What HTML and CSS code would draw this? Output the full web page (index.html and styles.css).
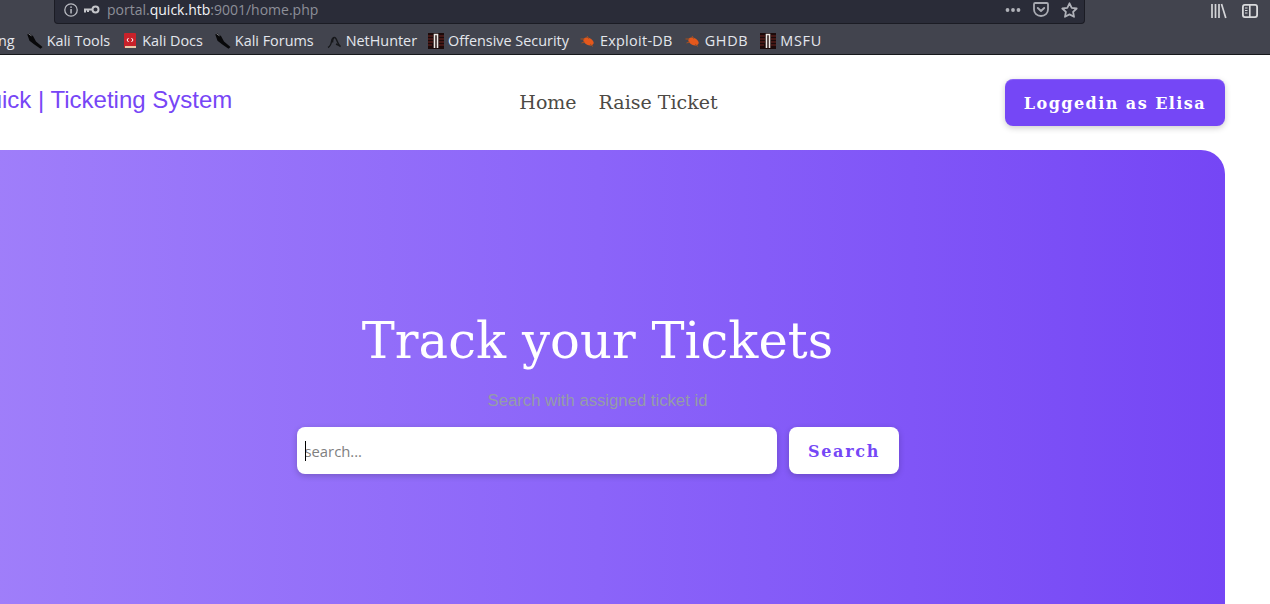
FILE: index.html
```html
<!DOCTYPE html>
<html lang="en">
<head>
<meta charset="utf-8">
<title>Quick | Ticketing System</title>
<link rel="stylesheet" href="styles.css">
</head>
<body>
<div class="chrome">
  <div class="urlrow">
    <div class="urlbar">
      <svg class="ico-info" width="14" height="14" viewBox="0 0 14 14"><circle cx="7" cy="7" r="6.200" fill="none" stroke="#b9bbc2" stroke-width="1.300"/><rect x="6.300" y="6" width="1.500" height="4.500" fill="#b9bbc2"/><rect x="6.300" y="3.400" width="1.500" height="1.500" fill="#b9bbc2"/></svg>
      <svg class="ico-key" width="17" height="10" viewBox="0 0 17 10"><circle cx="12.500" cy="4.500" r="3" fill="none" stroke="#c4c5ca" stroke-width="2"/><path d="M1 4.500h9M2 4.500v3M5 4.500v2.500" fill="none" stroke="#c4c5ca" stroke-width="2"/></svg>
      <div class="url"><span>portal.</span><b>quick.htb</b><span>:9001/home.php</span></div>
      <div class="url-actions">
        <svg width="16" height="6" viewBox="0 0 16 6"><circle cx="2.500" cy="3" r="1.900" fill="#b0b2b9"/><circle cx="8" cy="3" r="1.900" fill="#b0b2b9"/><circle cx="13.500" cy="3" r="1.900" fill="#b0b2b9"/></svg>
        <svg width="16" height="16" viewBox="0 0 16 16"><path d="M2.200 1h11.600c.7 0 1.200.5 1.200 1.200v5.300c0 3.600-3 6.500-7 6.500s-7-2.900-7-6.500V2.200C1 1.500 1.500 1 2.200 1z" fill="none" stroke="#a9abb2" stroke-width="1.800"/><path d="M4.800 6l3.200 3 3.200-3" fill="none" stroke="#a9abb2" stroke-width="1.900" stroke-linecap="round" stroke-linejoin="round"/></svg>
        <svg width="17" height="16" viewBox="0 0 17 16"><path d="M8.500 1.300l2.200 4.500 5 .7-3.600 3.400.9 4.900-4.500-2.400L4 14.800l.9-4.900-3.600-3.400 5-.7z" fill="none" stroke="#b0b2b9" stroke-width="1.800" stroke-linejoin="round"/></svg>
      </div>
    </div>
    <div class="tools">
      <svg width="16" height="16" viewBox="0 0 16 16"><path d="M1 1v14M4.500 1v14M8 1v14M10.500 1l4.300 14" fill="none" stroke="#d4d5d8" stroke-width="1.700"/></svg>
      <svg width="16" height="14" viewBox="0 0 16 14"><rect x=".9" y=".9" width="14.200" height="12.200" rx="2" fill="none" stroke="#d9dadc" stroke-width="1.800"/><rect x="7" y="1" width="1.600" height="12" fill="#d9dadc"/><path d="M3 4h2.500M3 6.500h2.500M3 9h2.500" stroke="#d9dadc" stroke-width="1"/></svg>
    </div>
  </div>
  <div class="bookmarks">
    <span class="bm clip">ng</span>
    <span class="bm"><svg class="fav" width="16" height="16" viewBox="0 0 16 16"><path d="M.3 1.500L2 .3l4 2.700 3 5.500 6.500 5.500-2 1.700-6.500-4.500-4.500-3.500z" fill="#08080a"/><path d="M1.500 .8l3 2" stroke="#9a9ca2" stroke-width=".8"/></svg>Kali Tools</span>
    <span class="bm"><svg class="fav" width="16" height="16" viewBox="0 0 16 16"><rect x="2" y="0" width="12" height="15" rx="1" fill="#c9222a"/><rect x="3" y="13" width="11" height="2" fill="#e9c9a8"/><path d="M6.500 5L5 7l1.500 2M9.500 5L11 7 9.500 9" fill="none" stroke="#fff" stroke-width="1"/></svg>Kali Docs</span>
    <span class="bm"><svg class="fav" width="16" height="16" viewBox="0 0 16 16"><path d="M.3 1.500L2 .3l4 2.700 3 5.500 6.500 5.500-2 1.700-6.500-4.500-4.500-3.500z" fill="#08080a"/><path d="M1.500 .8l3 2" stroke="#9a9ca2" stroke-width=".8"/></svg>Kali Forums</span>
    <span class="bm tight"><svg class="fav" width="16" height="16" viewBox="0 0 16 16"><path d="M2 14.500c2-1 3-3 3.500-6 .4-2.500 1.500-4 3-4s2 2 3 4.500c.5 1.500 1.500 3 3 4.500-2-1-3-2-4.500-2.500M8 4.500c-1 1-1.500 3-1.500 5" fill="none" stroke="#17181b" stroke-width="1.400"/></svg>NetHunter</span>
    <span class="bm tight"><svg class="fav" width="16" height="16" viewBox="0 0 16 16"><rect width="16" height="16" fill="#1c0a0a"/><path d="M0 3h5M0 6h5M0 9h5M0 12h4M11 3h5M11 6h5M11 9h5M11 12h5" stroke="#6d2420" stroke-width="1.200"/><path d="M6.500 15V1.500h3V15" fill="none" stroke="#ece8e4" stroke-width="1.600"/></svg>Offensive Security</span>
    <span class="bm semi"><svg class="fav" width="16" height="16" viewBox="0 0 16 16"><ellipse cx="8.500" cy="8.500" rx="5.500" ry="3.500" transform="rotate(25 8.500 8.500)" fill="#e4581c"/><path d="M.5 6h4M1.500 10l3-1M7 3l2 3M13 13.500l-3-2.500" stroke="#a8501f" stroke-width="1"/></svg>Exploit-DB</span>
    <span class="bm wide"><svg class="fav" width="16" height="16" viewBox="0 0 16 16"><ellipse cx="8.500" cy="8.500" rx="5.500" ry="3.500" transform="rotate(25 8.500 8.500)" fill="#e4581c"/><path d="M.5 6h4M1.500 10l3-1M7 3l2 3M13 13.500l-3-2.500" stroke="#a8501f" stroke-width="1"/></svg>GHDB</span>
    <span class="bm wide"><svg class="fav" width="16" height="16" viewBox="0 0 16 16"><rect width="16" height="16" fill="#1c0a0a"/><path d="M0 3h5M0 6h5M0 9h5M0 12h4M11 3h5M11 6h5M11 9h5M11 12h5" stroke="#6d2420" stroke-width="1.200"/><path d="M6.500 15V1.500h3V15" fill="none" stroke="#ece8e4" stroke-width="1.600"/></svg>MSFU</span>
  </div>
</div>
<div class="page">
  <header class="site-header">
    <a class="brand">Quick | Ticketing System</a>
    <nav class="nav"><a>Home</a><a>Raise Ticket</a></nav>
    <a class="login">Loggedin as Elisa</a>
  </header>
  <section class="hero">
    <h1>Track your Tickets</h1>
    <p>Search with assigned ticket id</p>
    <form class="search">
      <div class="field"><span class="caret"></span><input type="text" placeholder="search..."></div>
      <button type="button">Search</button>
    </form>
  </section>
</div>
</body>
</html>
```
FILE: styles.css
```css
* { box-sizing: border-box; }
html, body { margin: 0; height: 604px; overflow: hidden; background: #fff; }
.chrome { height: 55px; background: #42444e; border-bottom: 1px solid #17181c; font-family: "Open Sans", "Noto Sans", sans-serif; }
.urlrow { height: 24px; display: flex; padding-left: 54px; }
.urlbar { width: 1031px; height: 24px; background: #2a2c38; border: 1px solid #1b1c24; border-top: 0; border-radius: 0 0 4px 4px; display: flex; align-items: center; padding: 0 6px 4px 9px; }
.ico-key { margin-left: 5px; }
.url { margin-left: 7px; font-size: 14px; color: #8d8f98; }
.url b { font-weight: 400; color: #f2f3f6; }
.url-actions { margin-left: auto; display: flex; align-items: center; gap: 12px; }
.tools { margin-left: auto; padding: 1px 12px 0 0; display: flex; gap: 15px; height: 20px; align-items: center; }
.bookmarks { height: 30px; display: flex; align-items: center; padding: 3px 0 0 0; font-size: 14.4px; color: #e4e7ed; white-space: nowrap; }
.bm { display: flex; align-items: center; margin-right: 12px; }
.bm.clip { margin-left: -2px; }
.bm.tight { margin-right: 11px; }
.bm.semi { letter-spacing: .3px; }
.bm.wide { letter-spacing: .7px; }
.fav { margin-right: 4px; }
.page { margin-left: -30px; width: 1255px; }
.site-header { height: 95px; position: relative; display: flex; align-items: center; font-family: "DejaVu Serif", serif; }
.brand { font-family: "Liberation Sans", sans-serif; font-size: 24px; color: #7746f6; margin-top: -5px; white-space: nowrap; }
.nav { margin-left: 287px; display: flex; gap: 22px; font-size: 19px; color: #4d4a45; margin-top: -1px; }
.login { margin-left: auto; width: 220px; height: 47px; line-height: 49px; text-align: center; background: #7547f6; color: #fff; font-weight: 700; font-size: 16px; letter-spacing: 1.45px; border-radius: 8px; box-shadow: 0 2px 6px rgba(0,0,0,.2), inset 0 1px 0 rgba(255,255,255,.15); }
.hero { height: 480px; border-top-right-radius: 24px; background: linear-gradient(90deg, #a07ffa 0%, #8b64f9 50%, #7546f5 100%); display: flex; flex-direction: column; align-items: center; padding-top: 158px; }
.hero h1 { margin: 0; font: 400 49.6px/66px "DejaVu Serif", serif; letter-spacing: .05px; color: #fff; }
.hero p { margin: 17px 0 0; font: 16.7px/20px "Liberation Sans", sans-serif; color: #959ca8; }
.search { display: flex; gap: 12px; margin-top: 16px; }
.field { width: 480px; height: 47px; background: #fff; border-radius: 8px; box-shadow: 0 2px 6px rgba(0,0,0,.2); display: flex; align-items: center; padding-left: 8px; position: relative; }
.caret { position: absolute; left: 8px; top: 14px; width: 1px; height: 20px; background: #000; }
.field input { border: 0; outline: 0; background: transparent; padding: 0; width: 100%; font: 14.8px "Open Sans", sans-serif; }
.field input::placeholder { color: #808080; }
.search button { width: 110px; height: 47px; padding: 2px 0 0 1px; border: 0; border-radius: 8px; background: #fff; color: #7547f6; font: 700 16px "DejaVu Serif", serif; letter-spacing: 1.7px; box-shadow: 0 2px 6px rgba(0,0,0,.2); }
```
